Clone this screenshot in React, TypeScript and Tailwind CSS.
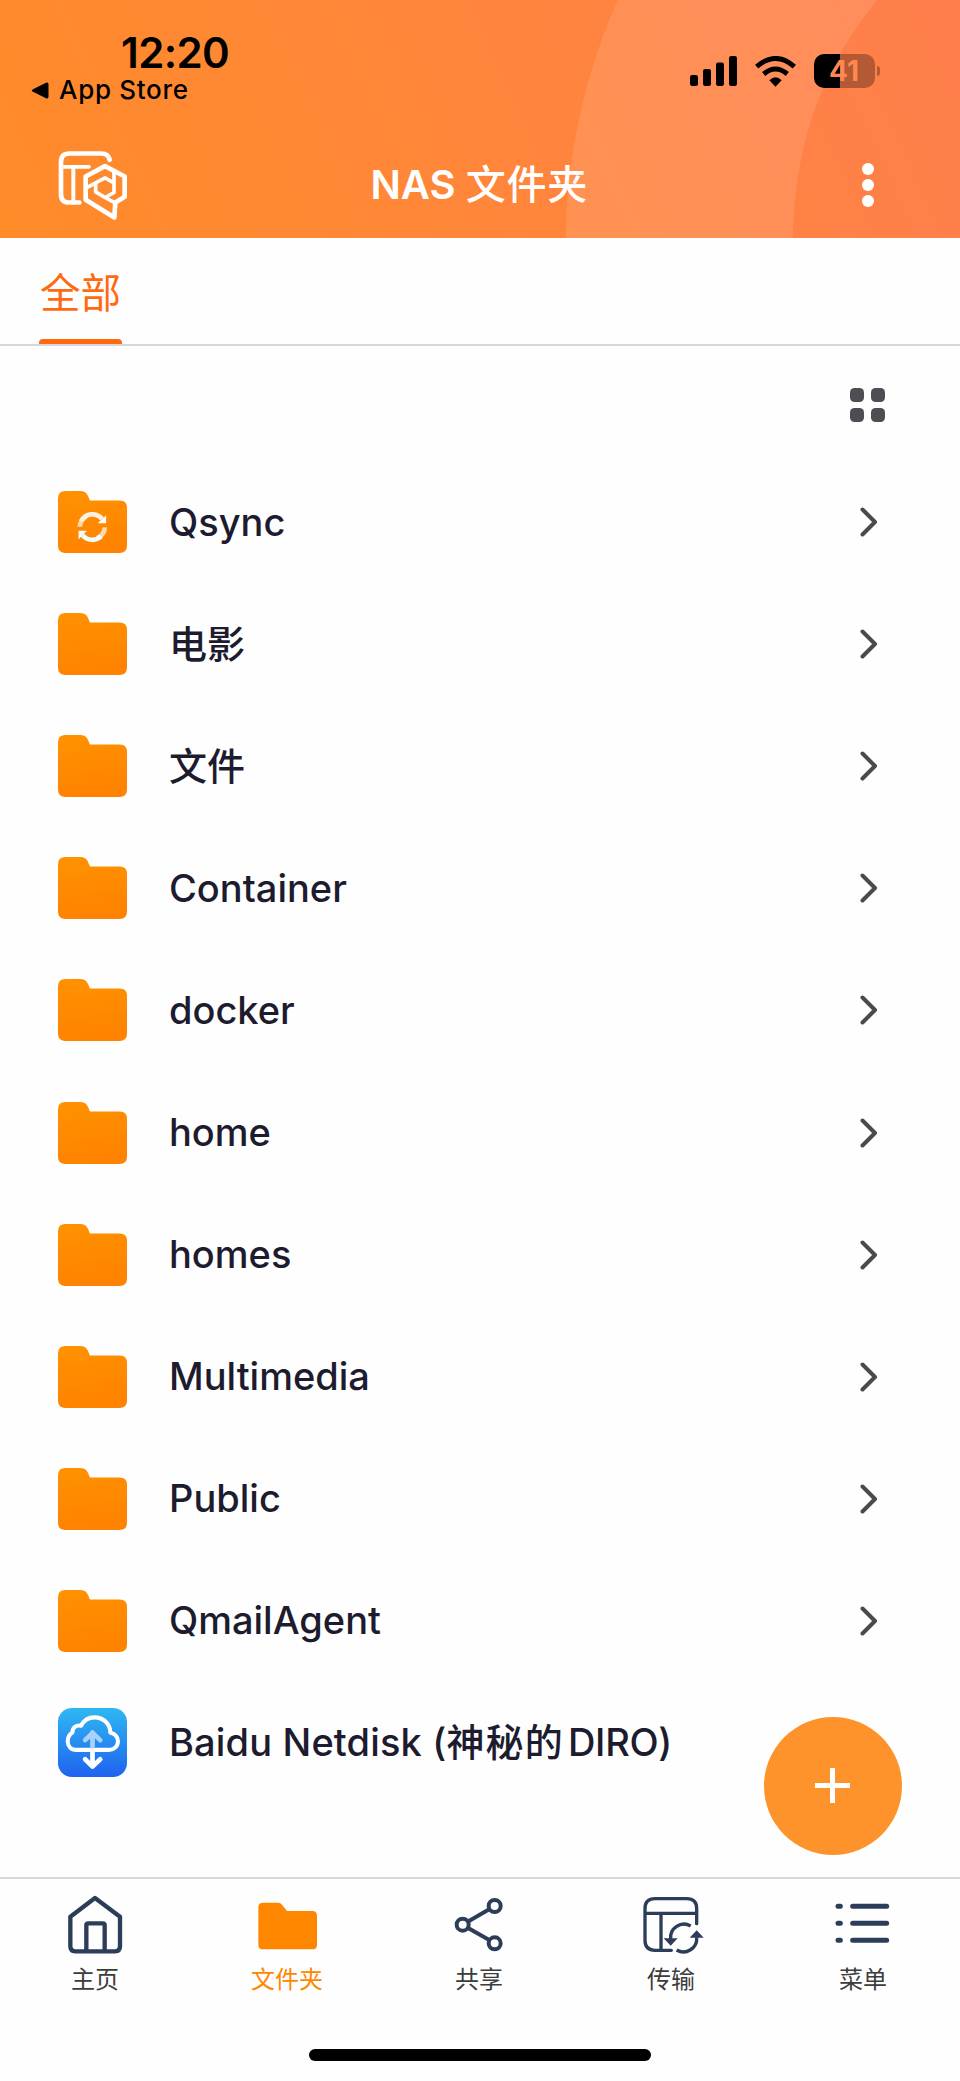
import React from 'react';

const folders = [
    { name: 'Qsync', type: 'sync' },
    { name: '电影', type: 'folder' },
    { name: '文件', type: 'folder' },
    { name: 'Container', type: 'folder' },
    { name: 'docker', type: 'folder' },
    { name: 'home', type: 'folder' },
    { name: 'homes', type: 'folder' },
    { name: 'Multimedia', type: 'folder' },
    { name: 'Public', type: 'folder' },
    { name: 'QmailAgent', type: 'folder' },
];

const StatusIcons: React.FC = () => (
    <div className="flex items-center">
        <svg width="47" height="30" viewBox="0 0 47 30">
            <rect x="0" y="19" width="8" height="11" rx="2.2" />
            <rect x="13" y="13" width="8" height="17" rx="2.2" />
            <rect x="26" y="6.5" width="8" height="23.5" rx="2.2" />
            <rect x="39" y="0" width="8" height="30" rx="2.2" />
        </svg>
        <svg className="ml-[18px]" width="41" height="31" viewBox="0 0 123 93" fill="none" stroke="black" strokeWidth="15">
            <path d="M5 32 Q61.500 -17 118 32" />
            <path d="M26 54 Q61.500 24 97 54" />
            <path d="M43 73 Q61.500 54 80 73 L61.500 92 Z" fill="black" stroke="none" />
        </svg>
        <div className="ml-[18px] flex items-center gap-[2px]">
            <div className="flex h-[34px] w-[61px] items-center justify-center overflow-hidden rounded-[10px] bg-[linear-gradient(to_right,#000_42%,#b35a35_42%)]">
                <span className="text-[28px] font-bold text-[#ff8850]">41</span>
            </div>
            <div className="h-[10px] w-[3px] rounded-r-full bg-[#b35a35]" />
        </div>
    </div>
);

const Logo: React.FC = () => (
    <svg width="70" height="71" viewBox="174 448 210 212" fill="none" stroke="white" strokeLinecap="round" strokeLinejoin="round">
        <path d="M329 477 Q325 458 304 458 H208 Q183 458 183 483 V580 Q183 605 208 605 H238" strokeWidth="14" />
        <path d="M183 498 H267" strokeWidth="11" />
        <path d="M220 498 V605" strokeWidth="12" />
        <path d="M315 496 L374 527 V588 L346 605 L343 650 L257 597 V527 Z" strokeWidth="14" />
        <path d="M315 531 L342 546 V575 L315 590 L287 573 V546 Z M342 514 V546 M287 546 L259 561 M315 590 L345 606" strokeWidth="11" />
    </svg>
);

const FolderIcon: React.FC<{ sync?: boolean }> = ({ sync }) => (
    <svg width="69" height="62" viewBox="0 0 205 184">
        <defs>
            <linearGradient id="folder" x1="0" y1="0" x2="0.2" y2="1">
                <stop offset="0" stopColor="#ff9200" />
                <stop offset="1" stopColor="#ff8300" />
            </linearGradient>
        </defs>
        <path
            d="M22 0 H66 C85 0 88 11 95 28 H183 Q205 28 205 50 V162 Q205 184 183 184 H22 Q0 184 0 162 V22 Q0 0 22 0 Z"
            fill="url(#folder)"
        />
        {sync && (
            <g fill="none" strokeWidth="14">
                <path d="M65 106 A37 37 0 0 1 84 75" stroke="#ffd9ac" />
                <path d="M69 90 A37 37 0 0 1 131 83" stroke="#fff0df" />
                <path d="M143 72 V96 H118 Z" fill="white" />
                <path d="M139 108 A37 37 0 0 1 116 140" stroke="#ffd9ac" />
                <path d="M128 134 A37 37 0 0 1 73 131" stroke="#ecfbff" />
                <path d="M61 144 V118 H86 Z" fill="#ecfbff" />
            </g>
        )}
    </svg>
);

const BaiduIcon: React.FC = () => (
    <svg width="69" height="69" viewBox="0 0 206 206" fill="none" strokeLinecap="round" strokeLinejoin="round">
        <defs>
            <linearGradient id="baidu" x1="0" y1="0" x2="0" y2="1">
                <stop offset="0" stopColor="#2fb8f2" />
                <stop offset="1" stopColor="#1f62f0" />
            </linearGradient>
        </defs>
        <rect width="206" height="206" rx="42" fill="url(#baidu)" />
        <path
            d="M55 125 C38 125 29 113 29 99 C29 87 35 78 43 73 C43 58 54 50 69 53 C77 37 91 28 109 28 C136 28 156 48 156 73 C170 77 179 86 179 99 C179 114 168 125 152 125 Z"
            stroke="white"
            strokeWidth="12"
        />
        <path d="M103 116 V73 M81 96 L103 74 L126 96" stroke="#a9d2fb" strokeWidth="14" />
        <path d="M103 127 V175 M81 153 L103 175 L126 153" stroke="white" strokeWidth="14" />
    </svg>
);

const HomeIcon: React.FC = () => (
    <svg width="64" height="64" viewBox="0 0 192 192" fill="none" stroke="#2b3d58" strokeWidth="13" strokeLinejoin="round">
        <path d="M93 15 L168 71 V160 Q168 175 153 175 H34 Q19 175 19 160 V71 Z" />
        <path d="M67 175 V97 Q67 91 73 91 H116 Q122 91 122 97 V175" />
    </svg>
);

const FolderTabIcon: React.FC = () => (
    <svg width="64" height="64" viewBox="0 0 192 192" fill="#ff8700">
        <path d="M21 29 H66 Q72 29 76 33 L93 54 H169 Q183 54 183 68 V155 Q183 169 169 169 H21 Q7 169 7 155 V43 Q7 29 21 29 Z" />
    </svg>
);

const ShareIcon: React.FC = () => (
    <svg width="64" height="64" viewBox="0 0 192 192" fill="none" stroke="#2b3d58" strokeWidth="12">
        <circle cx="44" cy="95" r="18" />
        <circle cx="140" cy="39" r="18" />
        <circle cx="140" cy="151" r="18" />
        <path d="M59 86 L125 48 M59 104 L125 142" />
    </svg>
);

const TransferIcon: React.FC = () => (
    <svg width="64" height="64" viewBox="0 0 192 192" fill="none" stroke="#2b3d58" strokeWidth="10">
        <path d="M170 92 V47 Q170 17 140 17 H45 Q15 17 15 47 V142 Q15 172 45 172 H94" strokeLinecap="round" />
        <path d="M15 61 H170 M63 61 V168" />
        <path d="M152 99 A40 40 0 0 0 92 138 M110 171 A40 40 0 0 0 170 133" />
        <path d="M71 136 H113 L92 158 Z M149 134 H191 L170 112 Z" fill="#2b3d58" stroke="none" />
    </svg>
);

const MenuIcon: React.FC = () => (
    <svg width="64" height="64" viewBox="0 0 192 192" fill="none" stroke="#2b3d58" strokeWidth="15" strokeLinecap="round">
        <path d="M18 40 H25 M18 91 H25 M18 142 H25" />
        <path d="M62 40 H164 M62 91 H164 M62 142 H164" />
    </svg>
);

const tabs = [
    { label: '主页', icon: <HomeIcon /> },
    { label: '文件夹', icon: <FolderTabIcon />, active: true },
    { label: '共享', icon: <ShareIcon /> },
    { label: '传输', icon: <TransferIcon /> },
    { label: '菜单', icon: <MenuIcon /> },
];

const App: React.FC = () => {
    return (
        <div className="relative flex h-[2081px] w-[960px] flex-col overflow-hidden bg-[#fefefe] font-['Inter','Noto_Sans_CJK_SC',sans-serif]">
            <header className="relative h-[238px] bg-[linear-gradient(65deg,#ff8b29_0%,#ff863a_48%,#ff7e4d_100%)]">
                <svg className="absolute inset-0" width="960" height="238" viewBox="0 0 960 238">
                    <path d="M618 0 C590 60 566 150 566 238 H792.700 C795 160 812 80 877 0 Z" fill="white" fillOpacity="0.11" />
                </svg>
                <div className="relative flex h-[142px] items-start justify-between pl-[31px] pr-[80.500px]">
                    <div className="pt-[33px] text-black">
                        <p className="pl-[90px] text-[42px] font-semibold leading-[40px] tracking-[-0.6px]">12:20</p>
                        <p className="mt-[2px] flex items-center text-[26px] font-medium leading-[30px] tracking-[0.7px]">
                            <svg className="mr-[10px]" width="18" height="17" viewBox="0 0 18 17">
                                <path d="M2 7.200 L15 0.800 Q17.500 0 17.500 2.500 V14.500 Q17.500 17 15 16.200 L2 9.800 Q-0.500 8.500 2 7.200 Z" />
                            </svg>
                            App Store
                        </p>
                    </div>
                    <div className="pt-[54px]">
                        <StatusIcons />
                    </div>
                </div>
                <div className="relative flex h-[86px] items-center justify-between pl-[58px] pr-[86.500px]">
                    <Logo />
                    <h1 className="ml-[27px] text-[40px] font-semibold text-white">
                        NAS <span className="font-medium tracking-[0.8px]">文件夹</span>
                    </h1>
                    <div className="flex w-[70px] flex-col items-end gap-[4px]">
                        <span className="size-[12px] rounded-full bg-white" />
                        <span className="size-[12px] rounded-full bg-white" />
                        <span className="size-[12px] rounded-full bg-white" />
                    </div>
                </div>
            </header>

            <nav className="flex h-[108px] items-end border-b-2 border-[#d8d8d8] pl-[39px]">
                <div className="flex h-full w-[83px] flex-col items-center justify-between">
                    <span className="pt-[27px] text-[40.500px] leading-[58px] text-[#ff6a10]">全部</span>
                    <span className="h-[5px] w-full rounded-t-[4px] bg-[#ff6a10]" />
                </div>
            </nav>

            <div className="flex h-[115px] items-start justify-end pr-[75.500px] pt-[41.500px]">
                <div className="grid grid-cols-2 gap-[6.500px]">
                    {[0, 1, 2, 3].map((i) => (
                        <span key={i} className="size-[14px] rounded-[4.500px] bg-[#4e4d54]" />
                    ))}
                </div>
            </div>

            <main className="flex-1 text-[38px] font-medium text-[#1d1b2e]">
                {folders.map((folder) => (
                    <div key={folder.name} className="flex h-[122.100px] items-center pl-[58px] pr-[82.500px]">
                        <FolderIcon sync={folder.type === 'sync'} />
                        <span className="ml-[42px] flex-1">{folder.name}</span>
                        <svg width="18" height="30" viewBox="0 0 18 30" fill="none" stroke="#4a4a4a" strokeWidth="4" strokeLinecap="round" strokeLinejoin="round">
                            <path d="M2.500 2.500 L15 15 L2.500 27.500" />
                        </svg>
                    </div>
                ))}
                <div className="flex h-[122.100px] items-center pl-[58px]">
                    <BaiduIcon />
                    <p className="ml-[42px] tracking-[0.150px]">
                        Baidu Netdisk (<span className="mr-[4px] tracking-[1.200px]">神秘的</span>
                        <span className="tracking-[-0.300px]">DIRO)</span>
                    </p>
                </div>
            </main>

            <button className="absolute left-[764px] top-[1717px] flex size-[137.500px] items-center justify-center rounded-full bg-[#ff932b]">
                <svg width="35" height="35" viewBox="0 0 35 35" stroke="white" strokeWidth="5">
                    <path d="M17.500 0 V35 M0 17.500 H35" />
                </svg>
            </button>

            <footer className="flex h-[204px] flex-col items-center border-t-2 border-[#d9d9d9]">
                <div className="flex w-full pt-[14px]">
                    {tabs.map((tab) => (
                        <div key={tab.label} className="flex w-[192px] flex-col items-center">
                            {tab.icon}
                            <span className={`mr-[2px] mt-[6px] text-[24px] leading-[34px] ${tab.active ? 'text-[#ff8700]' : 'text-[#3c3c3c]'}`}>
                                {tab.label}
                            </span>
                        </div>
                    ))}
                </div>
                <div className="mt-[52px] h-[12px] w-[342px] rounded-full bg-black" />
            </footer>
        </div>
    );
};

export default App;
